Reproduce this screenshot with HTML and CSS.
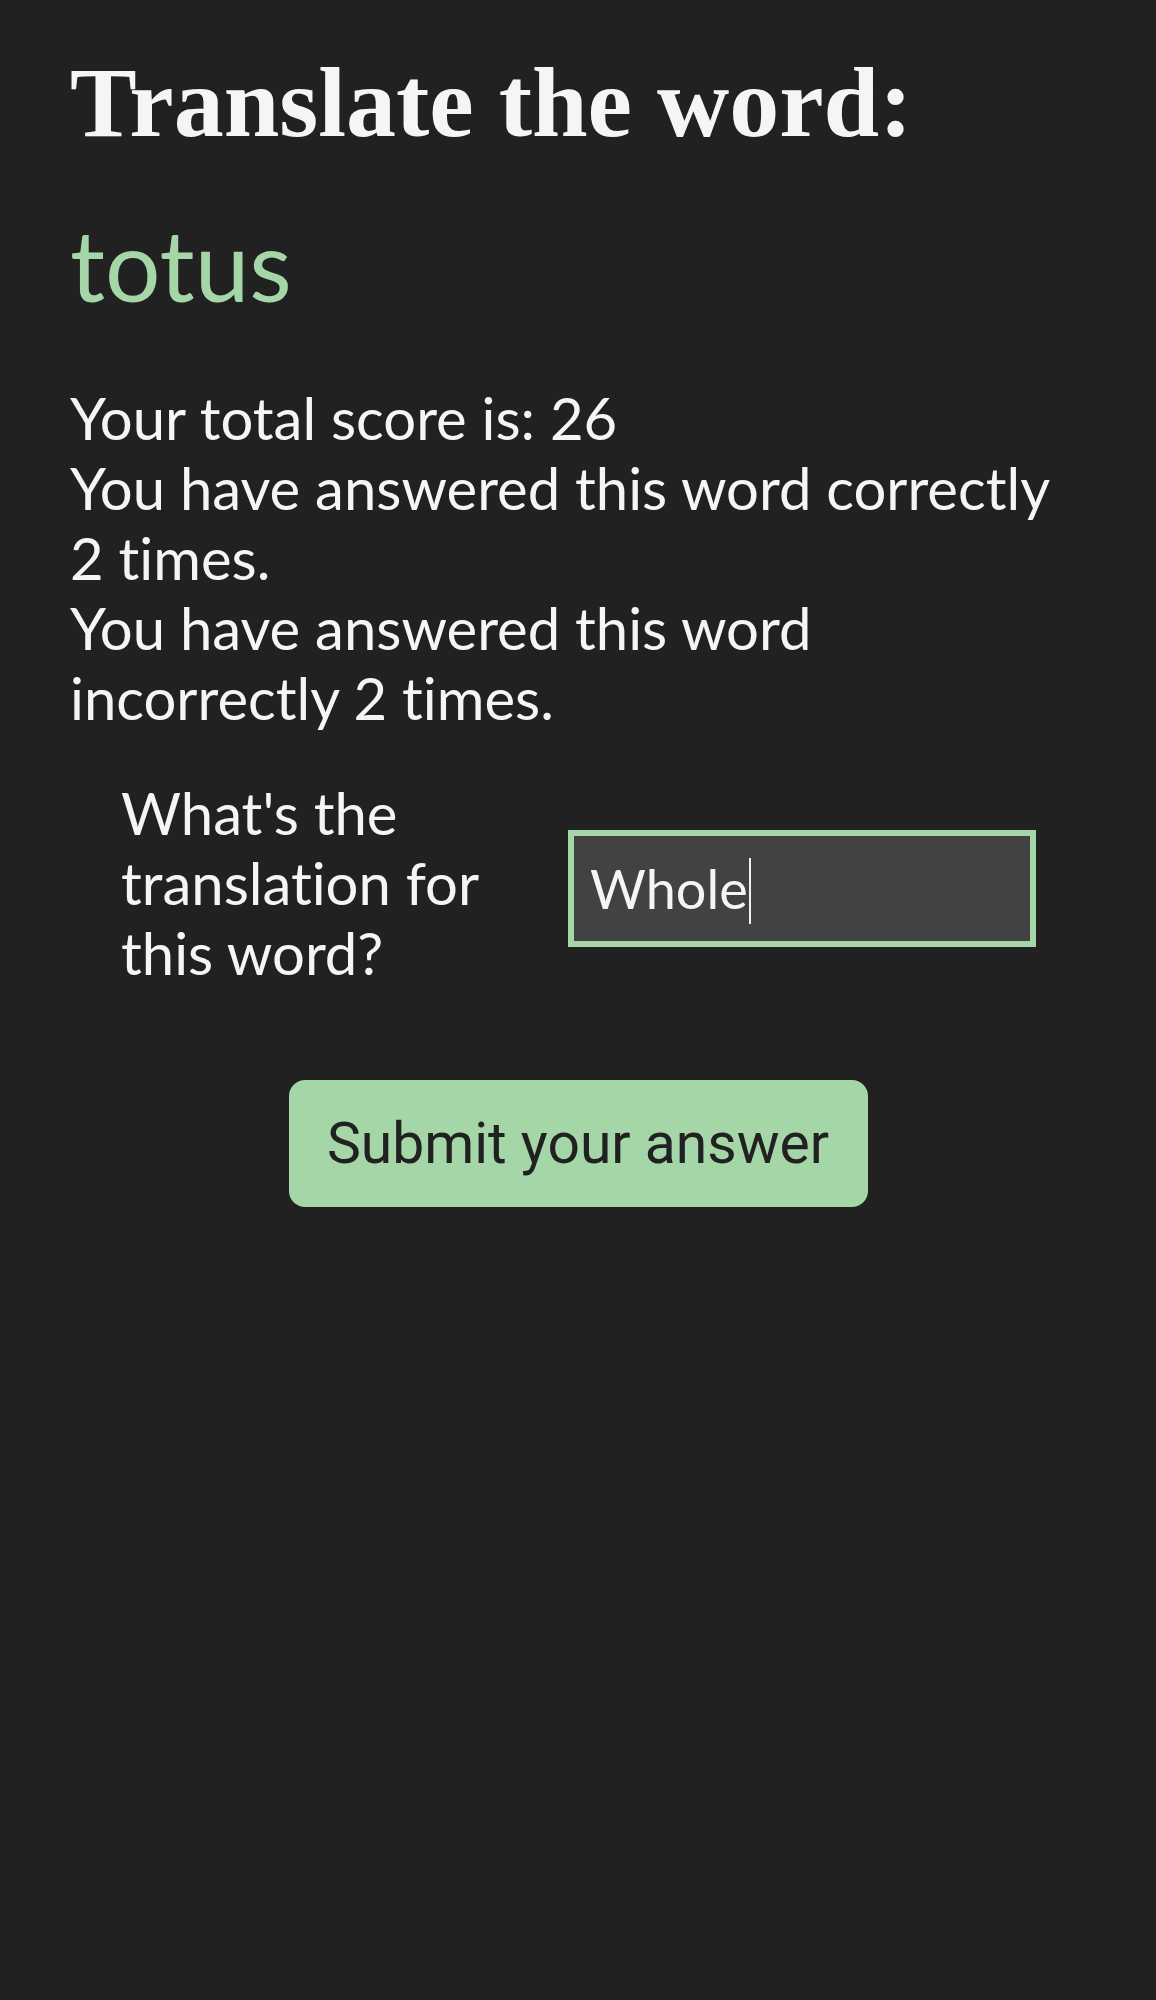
FILE: index.html
```html
<!DOCTYPE html>
<html lang="en">
<head>
<meta charset="utf-8">
<title>Translate the word</title>
<link rel="stylesheet" href="styles.css">
</head>
<body>
<main class="page">
  <h1 class="title">Translate the word:</h1>
  <h2 class="word">totus</h2>
  <div class="stats">
    <p>Your total score is: 26</p>
    <p>You have answered this word correctly 2 times.</p>
    <p>You have answered this word incorrectly 2 times.</p>
  </div>
  <form class="quiz">
    <div class="row">
      <label class="label" for="answer">What's the translation for this word?</label>
      <div class="answer" id="answer"><span class="answer-text">Whole</span><span class="caret"></span></div>
    </div>
    <button type="button" class="submit">Submit your answer</button>
  </form>
</main>
</body>
</html>
```

FILE: styles.css
```css
html, body {
  margin: 0;
  padding: 0;
  background: #212121;
}

body {
  min-height: 2000px;
  color: #f5f5f5;
  font-family: Lato, "Noto Sans", sans-serif;
  font-variant-ligatures: none;
}

.page {
  padding: 45px 70px 0 70px;
}

.title {
  margin: 0;
  font-family: "Liberation Serif", "Times New Roman", serif;
  font-weight: 700;
  font-size: 100px;
  line-height: 115px;
  color: #f5f5f5;
}

.word {
  margin: 47px 0 0 0;
  font-family: Lato, sans-serif;
  font-weight: 400;
  font-size: 98px;
  line-height: 115px;
  color: #a5d6a7;
}

.stats {
  margin-top: 61px;
  max-width: 995px;
  font-size: 58px;
  line-height: 70px;
}

.stats p {
  margin: 0;
}

.quiz {
  margin-top: 45px;
}

.row {
  display: flex;
  justify-content: space-between;
  align-items: flex-start;
  padding: 0 50px 0 51px;
}

.label {
  flex: 0 0 400px;
  font-size: 58px;
  line-height: 70px;
}

.answer {
  box-sizing: border-box;
  width: 468px;
  height: 117px;
  margin-top: 52px;
  border: 6px solid #a5d6a7;
  background: #424242;
  padding: 0 16px;
  display: flex;
  align-items: center;
  font-size: 54px;
  color: #f5f5f5;
}

.caret {
  display: inline-block;
  width: 2px;
  height: 66px;
  margin-left: 1px;
  margin-top: 4px;
  background: #f0f0f0;
}

.submit {
  display: block;
  box-sizing: border-box;
  width: 579px;
  height: 127px;
  margin: 92px auto 0 auto;
  border: none;
  border-radius: 16px;
  background: #a5d6a7;
  color: #212121;
  font-family: Roboto, sans-serif;
  font-size: 57px;
  padding: 0;
}
```
